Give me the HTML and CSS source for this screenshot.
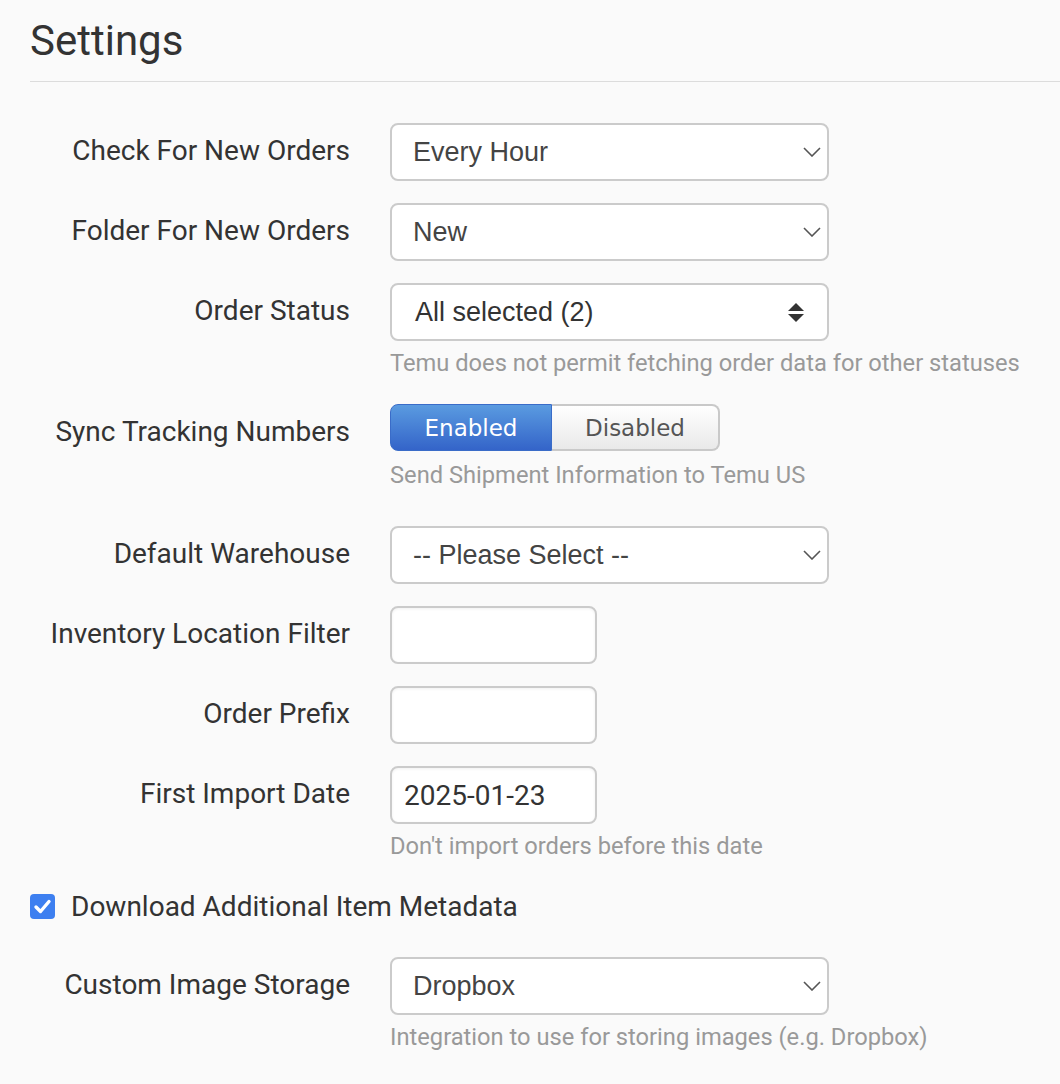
FILE: index.html
```html
<!DOCTYPE html>
<html lang="en">
<head>
<meta charset="utf-8">
<title>Settings</title>
<link rel="stylesheet" href="styles.css">
</head>
<body>
<div class="page">
  <h1 class="title">Settings</h1>
  <hr class="divider">
  <div class="form">
    <div class="row">
      <div class="label">Check For New Orders</div>
      <div class="field">
        <div class="select"><span>Every Hour</span><svg class="chev" width="18" height="10" viewBox="0 0 18 10"><path d="M1 1 L9 9 L17 1" fill="none" stroke="#555" stroke-width="1.6"/></svg></div>
      </div>
    </div>
    <div class="row">
      <div class="label">Folder For New Orders</div>
      <div class="field">
        <div class="select"><span>New</span><svg class="chev" width="18" height="10" viewBox="0 0 18 10"><path d="M1 1 L9 9 L17 1" fill="none" stroke="#555" stroke-width="1.6"/></svg></div>
      </div>
    </div>
    <div class="row">
      <div class="label">Order Status</div>
      <div class="field">
        <div class="select select--multi"><span class="multi-text">All selected (2)</span><svg width="16" height="19" viewBox="0 0 16 19"><path d="M8 0 L16 8 L0 8 Z" fill="#333"/><path d="M0 11 L16 11 L8 19 Z" fill="#333"/></svg></div>
        <div class="help">Temu does not permit fetching order data for other statuses</div>
      </div>
    </div>
    <div class="row">
      <div class="label">Sync Tracking Numbers</div>
      <div class="field">
        <div class="toggle">
          <div class="seg seg--on">Enabled</div>
          <div class="seg seg--off">Disabled</div>
        </div>
        <div class="help help--toggle">Send Shipment Information to Temu US</div>
      </div>
    </div>
    <div class="row">
      <div class="label">Default Warehouse</div>
      <div class="field">
        <div class="select"><span>-- Please Select --</span><svg class="chev" width="18" height="10" viewBox="0 0 18 10"><path d="M1 1 L9 9 L17 1" fill="none" stroke="#555" stroke-width="1.6"/></svg></div>
      </div>
    </div>
    <div class="row">
      <div class="label">Inventory Location Filter</div>
      <div class="field"><input class="input" type="text"></div>
    </div>
    <div class="row">
      <div class="label">Order Prefix</div>
      <div class="field"><input class="input" type="text"></div>
    </div>
    <div class="row">
      <div class="label">First Import Date</div>
      <div class="field">
        <input class="input" type="text" value="2025-01-23">
        <div class="help">Don't import orders before this date</div>
      </div>
    </div>
    <div class="check-row">
      <svg class="checkbox" width="25" height="25" viewBox="0 0 25 25"><rect x="0" y="0" width="25" height="25" rx="4" fill="#3d7ff0"/><path d="M6 13 L10.5 17.5 L19 7.5" fill="none" stroke="#fff" stroke-width="3.4" stroke-linecap="round" stroke-linejoin="round"/></svg>
      <span class="check-label">Download Additional Item Metadata</span>
    </div>
    <div class="row">
      <div class="label">Custom Image Storage</div>
      <div class="field">
        <div class="select"><span>Dropbox</span><svg class="chev" width="18" height="10" viewBox="0 0 18 10"><path d="M1 1 L9 9 L17 1" fill="none" stroke="#555" stroke-width="1.6"/></svg></div>
        <div class="help">Integration to use for storing images (e.g. Dropbox)</div>
      </div>
    </div>
  </div>
</div>
</body>
</html>
```
FILE: styles.css
```css
html, body {
  margin: 0;
  padding: 0;
}
body {
  background: #fafafa;
  font-family: Roboto, "Liberation Sans", sans-serif;
  color: #333;
}
.page {
  padding: 17px 0 0 30px;
}
.title {
  margin: 0;
  font-size: 42px;
  line-height: 48px;
  font-weight: 400;
  color: #333;
}
.divider {
  margin: 16px 0 0;
  border: 0;
  border-top: 1px solid #dcdcdc;
  height: 0;
}
.form {
  margin-top: 41px;
  display: flex;
  flex-direction: column;
  gap: 22px;
}
.row {
  display: grid;
  grid-template-columns: 320px auto;
  column-gap: 40px;
  align-items: start;
}
.label {
  text-align: right;
  font-size: 28px;
  line-height: 56px;
  height: 58px;
  color: #333;
  white-space: nowrap;
}
.field {
  display: flex;
  flex-direction: column;
  align-items: flex-start;
}
.select {
  box-sizing: border-box;
  width: 439px;
  height: 58px;
  border: 2px solid #cbcbcb;
  border-radius: 8px;
  background: #fff;
  display: flex;
  align-items: center;
  justify-content: space-between;
  padding: 0 6px 0 21px;
  font-family: "Liberation Sans", Arial, sans-serif;
  font-size: 27px;
  color: #444;
}
.select--multi {
  padding-right: 23px;
  padding-left: 23px;
  color: #333;
}
.chev {
  display: block;
}
.input {
  box-sizing: border-box;
  width: 207px;
  height: 58px;
  border: 2px solid #cbcbcb;
  border-radius: 8px;
  background: #fff;
  padding: 0 12px;
  margin: 0;
  font-family: Roboto, sans-serif;
  font-size: 28px;
  color: #333;
  box-shadow: inset 0 1px 3px rgba(0, 0, 0, 0.06);
  outline: none;
}
.help {
  margin-top: 8px;
  margin-bottom: 5px;
  font-size: 23.7px;
  line-height: 28px;
  color: #999;
  white-space: nowrap;
}
.help--toggle {
  margin-top: 10px;
  margin-bottom: 15px;
}
.toggle {
  display: flex;
  height: 47px;
}
.seg {
  box-sizing: border-box;
  height: 47px;
  display: flex;
  align-items: center;
  justify-content: center;
  font-family: "DejaVu Sans", Verdana, sans-serif;
  font-size: 23px;
}
.seg--on {
  width: 162px;
  color: #fff;
  background: linear-gradient(#5a9be0, #3464c9);
  border: 1px solid #3a6cc8;
  border-radius: 8px 0 0 8px;
}
.seg--off {
  width: 168px;
  color: #555;
  background: linear-gradient(#ffffff, #e9e9e9);
  border: 2px solid #c9c9c9;
  border-left: 0;
  border-radius: 0 8px 8px 0;
}
.check-row {
  display: flex;
  align-items: center;
  gap: 16px;
  height: 40px;
  margin-top: -1px;
  margin-bottom: 9px;
}
.checkbox {
  display: block;
  flex: none;
}
.check-label {
  font-size: 28px;
  color: #333;
}
```
